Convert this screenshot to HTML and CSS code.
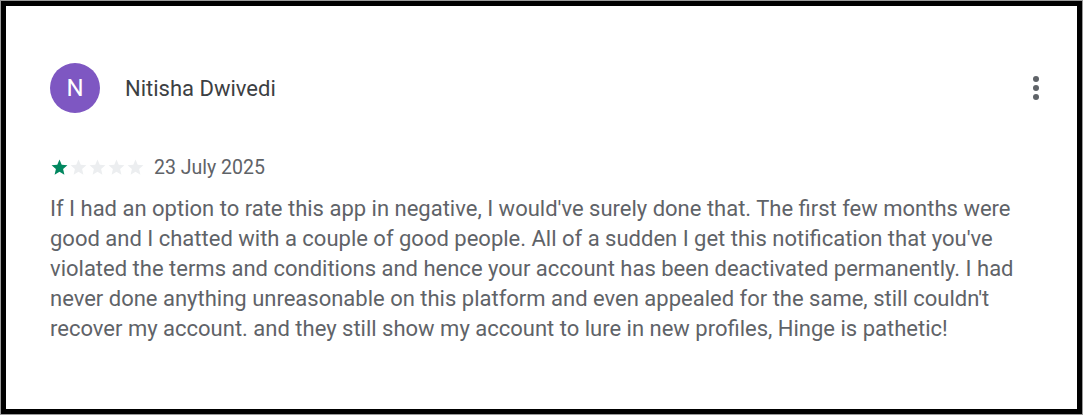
FILE: index.html
```html
<!DOCTYPE html>
<html>
<head>
<meta charset="utf-8">
<link rel="stylesheet" href="styles.css">
</head>
<body>
<div class="outer">
  <div class="frame">
    <div class="header">
      <div class="avatar">N</div>
      <div class="name">Nitisha Dwivedi</div>
      <div class="menu"><span></span><span></span><span></span></div>
    </div>
    <div class="meta">
      <div class="stars">
        <svg class="star on" viewBox="0 0 24 24"><path d="M12 17.27L18.18 21l-1.64-7.03L22 9.24l-7.19-.61L12 2 9.19 8.63 2 9.24l5.46 4.73L5.82 21z"/></svg>
        <svg class="star" viewBox="0 0 24 24"><path d="M12 17.27L18.18 21l-1.64-7.03L22 9.24l-7.19-.61L12 2 9.19 8.63 2 9.24l5.46 4.73L5.82 21z"/></svg>
        <svg class="star" viewBox="0 0 24 24"><path d="M12 17.27L18.18 21l-1.64-7.03L22 9.24l-7.19-.61L12 2 9.19 8.63 2 9.24l5.46 4.73L5.82 21z"/></svg>
        <svg class="star" viewBox="0 0 24 24"><path d="M12 17.27L18.18 21l-1.64-7.03L22 9.24l-7.19-.61L12 2 9.19 8.63 2 9.24l5.46 4.73L5.82 21z"/></svg>
        <svg class="star" viewBox="0 0 24 24"><path d="M12 17.27L18.18 21l-1.64-7.03L22 9.24l-7.19-.61L12 2 9.19 8.63 2 9.24l5.46 4.73L5.82 21z"/></svg>
      </div>
      <span class="date">23 July 2025</span>
    </div>
    <p class="text">If I had an option to rate this app in negative, I would've surely done that. The first few months were good and I chatted with a couple of good people. All of a sudden I get this notification that you've violated the terms and conditions and hence your account has been deactivated permanently. I had never done anything unreasonable on this platform and even appealed for the same, still couldn't recover my account. and they still show my account to lure in new profiles, Hinge is pathetic!</p>
  </div>
</div>
</body>
</html>
```
FILE: styles.css
```css
html, body {
  margin: 0;
  padding: 0;
  background: #fff;
}
.outer {
  width: 1083px;
  height: 415px;
  box-sizing: border-box;
  border: 1px solid #9a9a9a;
}
.frame {
  height: 100%;
  box-sizing: border-box;
  border: 5px solid #000;
  padding: 57px 37px 0 44px;
  font-family: Roboto, "Liberation Sans", sans-serif;
}
.header {
  display: flex;
  align-items: center;
  height: 50px;
}
.avatar {
  width: 50px;
  height: 50px;
  border-radius: 50%;
  background: #7e57c2;
  color: #fff;
  font-size: 24px;
  display: flex;
  align-items: center;
  justify-content: center;
}
.name {
  margin-left: 25px;
  font-size: 22px;
  color: #3c4043;
  flex: 1;
}
.menu {
  display: flex;
  flex-direction: column;
  gap: 3px;
  align-items: center;
  width: 8px;
}
.menu span {
  width: 6px;
  height: 6px;
  border-radius: 50%;
  background: #5f6368;
}
.meta {
  display: flex;
  align-items: center;
  margin-top: 44px;
  height: 20px;
}
.stars {
  display: flex;
}
.star {
  width: 19px;
  height: 19px;
  fill: #eceef0;
}
.star.on {
  fill: #01875f;
}
.date {
  margin-left: 9px;
  font-size: 19.5px;
  color: #5f6368;
}
.text {
  margin: 17px 0 0;
  font-size: 22px;
  line-height: 30px;
  color: #5f6368;
}
```
